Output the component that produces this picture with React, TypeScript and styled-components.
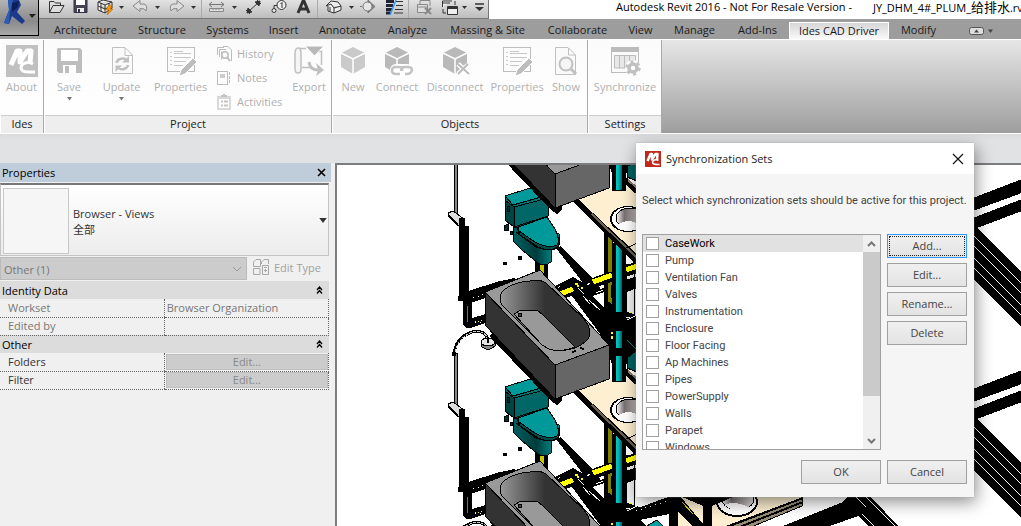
import React from "react";
import styled, { createGlobalStyle, css } from "styled-components";

const ui = `"Open Sans", "Noto Sans CJK SC", sans-serif`;

const Global = createGlobalStyle`
  *, *::before, *::after { box-sizing: border-box; }
  body { margin: 0; font: 11px/16px ${ui}; color: #222; background: #e0e1e3; overflow: hidden; }
  button, input, select { font: inherit; color: inherit; margin: 0; }
  svg { display: block; flex: none; }
`;

/* ---------- frame ---------- */

const Page = styled.div`
  position: relative;
  min-height: 100vh;
  display: flex;
  flex-direction: column;
`;
const Header = styled.header`
  display: grid;
  grid-template-columns: 39px minmax(0, 1fr);
  grid-template-rows: 19px 20px;
`;
const AppButton = styled.button`
  display: flex;
  align-items: flex-start;
  padding: 0;
  height: 36px;
  border: solid #000;
  border-width: 0 1px 1px 0;
  background: linear-gradient(#b4b4b4, #8a8a8a 60%, #a8a8a8);
`;
const AppCell = styled.div`
  grid-row: 1 / 3;
  background: #9d9d9d;
  display: grid;
  align-content: start;
`;
const TitleRow = styled.div`
  display: flex;
  align-items: stretch;
  background: #fff;
  min-width: 0;
`;
const QuickBar = styled.div`
  display: flex;
  flex: none;
  align-items: flex-start;
  padding-left: 8px;
  width: 450px;
  border-right: 1px solid #777;
  border-bottom: 1px solid #777;
  background: linear-gradient(#e2e2e2, #bdbdbd);
`;
const QuickButton = styled.button<{ $w: number }>`
  width: ${(p) => p.$w}px;
  height: 16px;
  padding: 0;
  border: 0;
  background: none;
  display: flex;
  justify-content: center;
  flex: none;
`;
const QuickRule = styled.span`
  width: 1px;
  height: 18px;
  background: #aaa;
  flex: none;
`;
const Title = styled.h1`
  flex: 1;
  min-width: 0;
  margin: 0;
  padding-left: 127px;
  font: 400 11px/14px ${ui};
  white-space: nowrap;
  overflow: hidden;
  color: #000;
  display: flex;
  gap: 21px;
`;
const Han = styled.span`
  font-size: 13px;
`;
const Tabs = styled.nav`
  display: flex;
  align-items: flex-end;
  background: #9d9d9d;
  padding-left: 4px;
  min-width: 0;
`;
const Tab = styled.a<{ $w: number; $on?: boolean }>`
  width: ${(p) => p.$w}px;
  height: 17px;
  line-height: 16px;
  text-align: center;
  white-space: nowrap;
  color: #1a1a1a;
  text-decoration: none;
  flex: none;
  ${(p) => p.$on && css`
    background: linear-gradient(#d6d6d6, #fafafa);
    border: 1px solid #fff;
    border-bottom: 0;
    line-height: 15px;
  `}
`;
const MinimizeRibbon = styled.button`
  margin-left: 20px;
  height: 17px;
  padding: 0;
  border: 0;
  background: none;
  display: flex;
  align-items: center;
`;

/* ---------- ribbon ---------- */

const Ribbon = styled.div`
  display: flex;
  height: 95px;
  border-top: 1px solid #fff;
  border-bottom: 1px solid #fff;
  background: linear-gradient(#e6e6e6, #9e9e9e);
`;
const Panel = styled.section<{ $w: number }>`
  width: ${(p) => p.$w}px;
  flex: none;
  display: flex;
  flex-direction: column;
  background: linear-gradient(#fbfbfb, #fff);
  border-right: 1px solid #a9a9a9;
  border-left: 1px solid #fff;
`;
const PanelBody = styled.div`
  flex: 1;
  display: flex;
  align-items: flex-start;
`;
const PanelName = styled.h2`
  margin: 0;
  height: 18px;
  font: 400 11px/16px ${ui};
  text-align: center;
  background: #eee;
  border-top: 1px solid #ccc;
  color: #222;
`;
const ToolButton = styled.button<{ $w: number }>`
  width: ${(p) => p.$w}px;
  flex: none;
  padding: 5px 0 0;
  border: 0;
  background: none;
  color: #b0b0b0;
  display: flex;
  flex-direction: column;
  align-items: center;
  white-space: nowrap;
  line-height: 16px;
  gap: 2px;
`;
const ToolStack = styled.div`
  width: 76px;
  flex: none;
  padding: 2px 0 0 5px;
`;
const SmallTool = styled.button`
  height: 24px;
  padding: 0;
  border: 0;
  background: none;
  color: #b0b0b0;
  display: flex;
  align-items: center;
  gap: 5px;
`;
const OptionsBar = styled.div`
  height: 29px;
  background: linear-gradient(#d9dadc, #e1e2e4 6px, #e1e2e4);
`;

/* ---------- properties palette ---------- */

const Workspace = styled.main`
  flex: 1;
  display: flex;
  min-height: 0;
`;
const Palette = styled.aside`
  width: 335px;
  flex: none;
  background: #f0f0f0;
  color: #333;
  padding-right: 4px;
`;
const PaletteHead = styled.div`
  height: 19px;
  display: flex;
  justify-content: space-between;
  align-items: center;
  padding: 0 5px 0 2px;
  background: #bfcddb;
  color: #000;
`;
const PaletteTitle = styled.h2`
  margin: 0;
  font: 400 11px/18px ${ui};
`;
const PlainButton = styled.button`
  border: 0;
  padding: 0;
  background: none;
  display: flex;
  align-items: center;
`;
const TypePicker = styled.button`
  width: 329px;
  height: 73px;
  margin-top: 1px;
  padding: 1px 1px 0 2px;
  display: flex;
  align-items: center;
  text-align: left;
  border: 1px solid #c4c4c4;
  border-top: 2px solid #777;
  background: linear-gradient(#fff, #ececec);
`;
const TypePreview = styled.span`
  width: 66px;
  height: 66px;
  border: 1px solid #c8c8c8;
  background: #f6f6f6;
`;
const TypeName = styled.span`
  flex: 1;
  padding: 2px 0 0 4px;
  display: flex;
  flex-direction: column;
  line-height: 16px;
`;
const FilterRow = styled.div`
  display: flex;
  height: 24px;
  margin-top: 1px;
`;
const FilterWrap = styled.div`
  display: grid;
  width: 247px;
  height: 23px;
  align-items: center;
  border: 1px solid #bbb;
  background: #ccc;
  color: #777;
  & > * { grid-area: 1 / 1; }
  & > svg { justify-self: end; margin-right: 4px; }
`;
const FilterSelect = styled.select`
  appearance: none;
  width: 100%;
  height: 21px;
  border: 0;
  padding: 2px 3px 0;
  background: none;
`;
const EditType = styled.button`
  display: flex;
  gap: 4px;
  align-items: center;
  height: 21px;
  margin-left: 6px;
  padding: 0;
  border: 0;
  background: none;
  color: #a0a0a0;
`;
const PropTable = styled.table`
  width: 329px;
  border-collapse: collapse;
  table-layout: fixed;
`;
const GroupCell = styled.th`
  height: 18px;
  padding: 0 6px 0 2px;
  background: #dcdcdc;
  font-weight: 400;
  text-align: left;
  color: #000;
`;
const GroupLine = styled.div`
  display: flex;
  justify-content: space-between;
  align-items: center;
  line-height: 17px;
`;
const PropCell = styled.td<{ $dim?: boolean }>`
  height: 18px;
  padding: 0 0 0 8px;
  line-height: 16px;
  border-bottom: 1px dotted #666;
  color: ${(p) => (p.$dim ? "#777" : "#333")};
`;
const ValueCell = styled(PropCell)`
  padding: 0 0 0 2px;
  border-left: 1px dotted #666;
  border-right: 1px dotted #666;
`;
const ButtonCell = styled(ValueCell)`
  padding: 0 0 0 1px;
`;
const CellButton = styled.button`
  display: block;
  width: 100%;
  height: 16px;
  padding: 0;
  line-height: 14px;
  border: 1px solid #bfbfbf;
  background: #ccc;
  color: #888;
`;

/* ---------- drawing area ---------- */

const View = styled.div`
  flex: 1;
  min-width: 0;
  background: #fff;
  border-left: 2px solid #7d7d7d;
  border-top: 2px solid #7d7d7d;
  overflow: hidden;
  display: grid;
`;

/* ---------- dialog ---------- */

const Dialog = styled.section`
  position: absolute;
  left: 636px;
  top: 143px;
  width: 338px;
  background: #f5f5f5;
  color: #444;
  box-shadow: 0 0 1px #999, 2px 5px 16px rgba(0, 0, 0, 0.45);
`;
const DialogHead = styled.header`
  height: 31px;
  display: flex;
  align-items: center;
  gap: 5px;
  padding: 0 10px 0 9px;
  background: #fff;
`;
const DialogTitle = styled.h2`
  margin: 0;
  flex: 1;
  font: 400 11px/30px ${ui};
  color: #222;
`;
const DialogBody = styled.div`
  padding: 19px 7px 13px 6px;
`;
const Prompt = styled.p`
  margin: 0 0 25px;
  font-family: Roboto, sans-serif;
  line-height: 16px;
  white-space: nowrap;
`;
const Columns = styled.div`
  display: grid;
  grid-template-columns: minmax(0, 1fr) 80px;
  column-gap: 6px;
`;
const ListBox = styled.div`
  height: 216px;
  display: flex;
  border: 1px solid #a0a0a0;
  background: #fff;
  overflow: hidden;
`;
const SetList = styled.ul`
  flex: 1;
  margin: 0;
  padding: 0;
  list-style: none;
  font-family: Roboto, sans-serif;
`;
const SetRow = styled.li<{ $on: boolean }>`
  height: 17px;
  background: ${(p) => (p.$on ? "#e1e1e1" : "none")};
  color: ${(p) => (p.$on ? "#000" : "inherit")};
`;
const SetLabel = styled.label`
  display: flex;
  align-items: center;
  gap: 6px;
  height: 17px;
  padding-left: 3px;
`;
const Check = styled.input`
  appearance: none;
  width: 13px;
  height: 13px;
  border: 1px solid #a0a0a0;
  background: #fff;
  &:checked { background: #666; }
`;
const ScrollBar = styled.div`
  width: 17px;
  display: flex;
  flex-direction: column;
  background: #f0f0f0;
`;
const ScrollArrow = styled.button`
  height: 17px;
  padding: 0;
  border: 0;
  background: #f0f0f0;
  display: grid;
  place-items: center;
`;
const ScrollTrack = styled.div`
  flex: 1;
`;
const ScrollThumb = styled.div`
  height: 80%;
  background: #cacaca;
`;
const Side = styled.div`
  display: flex;
  flex-direction: column;
  gap: 5px;
`;
const PushButton = styled.button<{ $focus?: boolean }>`
  width: 80px;
  height: 24px;
  padding: 0;
  border: 1px solid ${(p) => (p.$focus ? "#3399ff" : "#a0a0a0")};
  background: linear-gradient(#f0f0f0, #e3e3e3);
  ${(p) => p.$focus && css`
    outline: 1px dotted #222;
    outline-offset: -3px;
  `}
`;
const Footer = styled.footer`
  display: flex;
  justify-content: flex-end;
  gap: 6px;
  margin-top: 10px;
`;

/* ---------- icons ---------- */

const Down = ({ w = 6, c = "#333" }: { w?: number; c?: string }) => (
  <svg width={w} height={w / 2 + 1} viewBox="0 0 6 4"><path d="M0 0H6L3 4Z" fill={c} /></svg>
);

const McLogo = ({ size, bg }: { size: number; bg: string }) => (
  <svg width={size} height={size} viewBox="0 0 32 32">
    <rect width="32" height="32" fill={bg} />
    <path d="M5 20L11 6H14L14 17L21 6H25L24 18" fill="none" stroke="#fff" strokeWidth="5" strokeLinejoin="round" />
    <path d="M27 19C22 16 15 18 15 23C16 28 22 27 29 27" fill="none" stroke="#fff" strokeWidth="3" />
  </svg>
);

const Floppy = () => (
  <svg width="32" height="32" viewBox="0 0 32 32">
    <path d="M5 3H27L29 5V28H6L4 26V4Z" fill="#bdbdbd" />
    <rect x="8" y="5" width="17" height="11" fill="#fff" />
    <rect x="10" y="20" width="13" height="8" fill="#fff" />
    <rect x="12" y="21" width="4" height="7" fill="#bdbdbd" />
  </svg>
);
const Update = () => (
  <svg width="32" height="32" viewBox="0 0 32 32" fill="none" stroke="#c0c0c0">
    <path d="M6.500 2.500H19L26.500 10V28.500H6.500Z M19 3V10.500H26" fill="#fafafa" />
    <path d="M10.500 18A6 5 0 0 1 20 14.500M22 20A6 5 0 0 1 13 23.500" strokeWidth="2.500" />
    <path d="M23 11V17.500H16ZM9.500 27V20.500H16Z" fill="#c0c0c0" stroke="none" />
  </svg>
);
const Sheet = () => (
  <svg width="32" height="32" viewBox="0 0 32 32" fill="none" stroke="#bdbdbd">
    <rect x="2.500" y="2.500" width="27" height="24" fill="#fcfcfc" />
    <path d="M5 7.500H7M5 11.500H7M5 15.500H7M5 19.500H7M9 6.500H18M9 8.500H26M9 12.500H26M9 16.500H21M9 20.500H18" stroke="#c8c8c8" />
    <path d="M14 31L16 25L28 13L32 17L20 29Z" fill="#bdbdbd" stroke="#fff" />
  </svg>
);
const Cube = ({ mark }: { mark?: "link" | "cut" }) => (
  <svg width="32" height="32" viewBox="0 0 32 32">
    <path d="M16 2L28 8V22L16 29L4 22V8Z" fill={mark ? "#b9b9b9" : "#cacaca"} />
    <path d="M4 8L16 14L28 8M16 14V29" fill="none" stroke="#fff" strokeWidth="1.500" />
    {mark === "link" && (
      <g fill="none">
        <rect x="9" y="19" width="23" height="13" rx="6" fill="#fff" />
        <path d="M19 29H15Q11 29 11 25.500Q11 22 15 22H18Q22 22 21 26M20 26Q20 22 24 22H27Q31 22 31 25Q30 29 26 29H24" stroke="#c3c3c3" strokeWidth="2.500" />
      </g>
    )}
    {mark === "cut" && (
      <g fill="none"><path d="M19 19L30 29M29 20L19 29" stroke="#fff" strokeWidth="5" />
        <path d="M19 19L30 29M29 19L19 29" stroke="#bbb" strokeWidth="2" /></g>
    )}
  </svg>
);
const Show = () => (
  <svg width="32" height="32" viewBox="0 0 32 32" fill="none" stroke="#c0c0c0">
    <path d="M5.500 2.500H18L25.500 10V29.500H5.500ZM18.500 3V10H25" fill="#fafafa" />
    <circle cx="16" cy="19" r="6.500" strokeWidth="2" fill="#f5f5f5" />
    <path d="M21 24L26 29" strokeWidth="3" />
  </svg>
);
const Sync = () => (
  <svg width="32" height="32" viewBox="0 0 32 32" fill="none" stroke="#bbb">
    <rect x="2.500" y="3.500" width="27" height="24" fill="#fafafa" />
    <rect x="2" y="2" width="28" height="5" fill="#bbb" stroke="none" />
    <path d="M5.500 10.500H26.500V23H5.500ZM10.500 10.500V23M15.500 10.500V23M20.500 10.500V23" fill="#e8e8e8" />
    <circle cx="24" cy="23" r="8" fill="#fff" stroke="none" />
    <circle cx="24" cy="23" r="4" strokeWidth="3.500" stroke="#c0c0c0" />
    <circle cx="24" cy="23" r="6.500" strokeWidth="2.500" strokeDasharray="3 3.800" stroke="#c0c0c0" />
  </svg>
);
const Export = () => (
  <svg width="32" height="32" viewBox="0 0 32 32" fill="none" stroke="#c0c0c0">
    <path d="M6 3.500H13M25 6.500H28.500V20M9 22.500H18" strokeWidth="1.500" />
    <path d="M2 10V24Q2 28 5 28Q8 28 8 24V8Q8 3 5 3Q2 3 2 9V13" fill="#f5f5f5" strokeWidth="1.500" />
    <path d="M12 1H31L21.500 11Z" fill="#b9b9b9" stroke="#fff" />
    <path d="M16 17Q17 25 25 25" strokeWidth="3" /><path d="M23 18L31 25L23 31L25 25Z" fill="#c0c0c0" stroke="none" />
  </svg>
);
const History = () => (
  <svg width="16" height="16" viewBox="0 0 16 16" fill="none" stroke="#bdbdbd">
    <path d="M1.500 9V1.500H8M3.500 11V3.500H10M5.500 13.500V5.500M7 .5H12L15.500 4V15" />
    <circle cx="9" cy="9" r="3.200" strokeWidth="1.500" /><path d="M11 11L14 15" strokeWidth="2" />
  </svg>
);
const Notes = () => (
  <svg width="16" height="16" viewBox="0 0 16 16" fill="none" stroke="#bdbdbd">
    <rect x="1.500" y="1.500" width="10" height="13" /><rect x="4" y="4" width="5" height="4" fill="#ccc" stroke="none" />
    <path d="M13.500 2V5M13.500 6V9M13.500 10V13" />
  </svg>
);
const Activities = () => (
  <svg width="16" height="16" viewBox="0 0 16 16">
    <path d="M1 2H15V16H1Z" fill="#d9d9d9" /><path d="M3 5H13V14H3Z" fill="#fff" />
    <path d="M5 3V1H7V0H9V1H11V3Z" fill="#c4c4c4" />
    <path d="M5 7.500H7M5 11.500H7M8 7.500H12M8 11.500H12" stroke="#c4c4c4" strokeWidth="2" />
  </svg>
);

const q = { width: 17, height: 16, viewBox: "0 0 17 16", fill: "none", stroke: "#333" };
const QuickIcon: Record<string, React.ReactNode> = {
  open: <svg {...q}><path d="M1.500 12.500V1.500H6L7.500 3H12.500V5.500M1.500 12.500L5 5.500H16L12 12.500Z" fill="#ddd" /></svg>,
  save: <svg {...q}><path d="M2 0V12.500H15V0" fill="#445" stroke="#334" /><rect x="4" y="0" width="9" height="5" fill="#fff" stroke="none" /><path d="M5 12V8H12V12" fill="#eee" stroke="none" /><rect x="6" y="9" width="2" height="3" fill="#334" stroke="none" /></svg>,
  sync: <svg {...q}><path d="M1 2L6 0L15 2V8L8 13L1 10ZM1 2L8 5L15 2M8 5V13M4 3V11M12 3V10M1 6L8 9L15 6" fill="#eee" /><path d="M12 5L9 10H12L10 15L16 9H13L15 5Z" fill="#f90" stroke="#b60" strokeWidth=".6" /></svg>,
  undo: <svg {...q}><path d="M1 6L8 .5V4H12Q16 5 14 11Q13 8 8 8.500V11.500Z" fill="#ddd" stroke="#888" /></svg>,
  redo: <svg {...q}><path d="M16 6L9 .5V4H5Q1 5 3 11Q4 8 9 8.500V11.500Z" fill="#ddd" stroke="#888" /></svg>,
  measure: <svg {...q}><path d="M1 4.500H16M4 2L1 4.500L4 7M13 2L16 4.500L13 7" stroke="#777" /><path d="M1.500 8.500H15.500V11.500H1.500ZM5 9V10M8 9V10M11 9V10" stroke="#888" fill="#ddd" /></svg>,
  dim: <svg {...q}><path d="M3 12L14 2M1 10L5 14M12 0L16 4" /><path d="M2 13L3 8L7 12ZM15 1L10 2L14 6Z" fill="#333" /></svg>,
  tag: <svg {...q}><path d="M4 8.500V5.500H8" /><circle cx="11.500" cy="5" r="4.500" fill="#eee" /><path d="M10.500 4L12 2.500V8" /><circle cx="4" cy="10.500" r="2" fill="#eee" /></svg>,
  text: <svg {...q}><path d="M3 13L8.500 0L14 13M5 9H12" strokeWidth="3" /></svg>,
  house: <svg {...q}><path d="M1 6L6 1L13 2L16 6V10L9 13L3 11V6M1 6L6 4L9 8L16 6M9 8V13M5 7V11" fill="#eee" /></svg>,
  section: <svg {...q}><path d="M2 6.500H0M8 0L15 6.500L8 13Z" fill="#888" stroke="#777" /><circle cx="7.500" cy="6.500" r="4.500" fill="#e6e6e6" stroke="#777" /></svg>,
  lines: <svg {...q}><path d="M0 1.500H8M0 5.500H7M0 9.500H6M0 13H5" strokeWidth="3" stroke="#223" /><path d="M10 1.500H17M10 5.500H17M9 9.500H17M8 13H17" /><path d="M4 15L10 0" stroke="#39f" strokeWidth="1.500" /></svg>,
  close: <svg {...q} stroke="#888"><path d="M4 4V.5H14V6M1.500 4.500H11.500V12.500H1.500ZM1 7H11" fill="#ddd" /><path d="M9 8L15 14M15 8L9 14" strokeWidth="2" /></svg>,
  swap: <svg {...q}><path d="M1.500 7V1H11M1 3H9M6.500 6.500H16.500V14.500H6.500Z" fill="#eee" /><path d="M6 8H17" strokeWidth="2" /><path d="M2 9V13H5M14 5V1" /></svg>,
  more: <svg {...q}><path d="M4 4H13" strokeWidth="1.500" /><path d="M4 7H13L8.500 11Z" fill="#333" stroke="none" /></svg>,
  down: <svg width="6" height="10" viewBox="0 0 6 10"><path d="M0 6H5L2.500 9Z" fill="#333" /></svg>,
};

const quick: [string, string, number][] = [
  ["open", "Open", 18], ["save", "Save", 30], ["sync", "Synchronize", 20], ["down", "Synchronize options", 14],
  ["undo", "Undo", 22], ["down", "Undo list", 14], ["redo", "Redo", 22], ["down", "Redo list", 14], ["|", "", 1],
  ["measure", "Measure", 29], ["down", "Measure options", 8], ["dim", "Aligned dimension", 28], ["tag", "Tag", 22], ["text", "Text", 28], ["|", "", 1],
  ["house", "3D view", 30], ["down", "View options", 8], ["section", "Section", 24], ["lines", "Thin lines", 28], ["|", "", 1],
  ["close", "Close hidden windows", 30], ["swap", "Switch windows", 20], ["down", "Window list", 12], ["more", "Customize", 17],
];

const tabs: [string, number][] = [
  ["Architecture", 85], ["Structure", 68], ["Systems", 63], ["Insert", 49], ["Annotate", 69], ["Analyze", 61],
  ["Massing & Site", 99], ["Collaborate", 81], ["View", 45], ["Manage", 63], ["Add-Ins", 63], ["Ides CAD Driver", 100], ["Modify", 59],
];

const sets = ["CaseWork", "Pump", "Ventilation Fan", "Valves", "Instrumentation", "Enclosure", "Floor Facing",
  "Ap Machines", "Pipes", "PowerSupply", "Walls", "Parapet", "Windows"];

const Tool = ({ w, label, icon, menu }: { w: number; label: string; icon: React.ReactNode; menu?: boolean }) => (
  <ToolButton $w={w}>{icon}<span>{label}</span>{menu && <Down w={5} c="#777" />}</ToolButton>
);

/* ---------- plumbing model: one storey is repeated every 191 units ---------- */

const STOREY = 191;
const levels = [-STOREY, 0, STOREY];

const Model = () => (
  <svg width="100%" height="100%" shapeRendering="crispEdges">
    <defs>
      <linearGradient id="tub" x1="500" x2="545" y1="0" y2="0" gradientUnits="userSpaceOnUse"><stop stopColor="#999" /><stop offset="1" stopColor="#333" /></linearGradient>
      <linearGradient id="teal"><stop stopColor="#00c8c8" /><stop offset=".4" stopColor="#00b4b4" /><stop offset="1" stopColor="#006060" /></linearGradient>
      <linearGradient id="bowl"><stop stopColor="#fff" /><stop offset=".3" stopColor="#777070" /><stop offset="1" stopColor="#e8e0e0" /></linearGradient>
      <linearGradient id="base" x1="513" x2="552" y1="0" y2="0" gradientUnits="userSpaceOnUse"><stop stopColor="#006060" /><stop offset=".6" stopColor="#003c3c" /><stop offset="1" stopColor="#008080" /></linearGradient>

      <g id="runs">
        <path d="M459 225L469 226V300H459ZM458 296H464V301H458Z" />
        <path d="M463 298H472V318L486 314V323L470 328Q463 328 463 323Z" />
        <rect x="467" y="306" width="1" height="16" fill="#808000" />
        <path d="M468 291L500 281L515 278V284L485 298L470 303Z" />
        <path d="M473 298L484 294M475 322H484" stroke="#fff" strokeDasharray="1 4" />
        <path d="M475 322L484 320" stroke="#ff0" strokeDasharray="1 2" />
        <path d="M454 353H457V406H454Z" fill="#888" stroke="#000" />
        <path d="M454 354Q456 337 472 332Q487 329 488 342" fill="none" stroke="#000" strokeWidth="3" />
        <path d="M455 352Q458 338 472 332Q485 330 487 338" fill="none" stroke="#ccc" strokeDasharray="3 1" />
        <rect x="452" y="352" width="4" height="4" />
        <path d="M481 343V346Q488 353 495 346V343Z" fill="#888" stroke="#000" />
        <ellipse cx="488" cy="342" rx="7" ry="4" fill="#e4e4e4" stroke="#000" />
        <path d="M487 337H489V343H487Z" />
        <path d="M448 404L453 402L464 410V415L459 417L449 408Z" fill="#ddd" stroke="#000" />
        <path d="M449 406L458 414V417L449 409ZM459 409H465V420L459 416Z" />

        <rect x="626" y="264" width="8" height="56" fill="#f0f0f0" stroke="#000" />
        <path d="M604 230H613V345H604Z" />
        <rect x="608" y="237" width="4" height="67" fill="#808000" />
        {/* branch lines climbing to the right */}
        <path d="M551 288L573 277L582 282L640 260V272L560 300L552 292Z" />
        <path d="M590 293L640 275V287L600 302Z" />
        {/* diagonal drain, widening into the junction by the riser */}
        <path d="M556 248L561 246L596 282L614 308L640 316V364H612L603 338L572 296L577 290L584 284Z" />
        <path d="M592 296L604 292V308Z" fill="#fff" />
        <path d="M589 300L600 310M583 296L590 304M578 288L584 294M575 285L578 283M587 285L590 283" stroke="#fff" />
        <path d="M615 284L622 281M596 293L603 290M556 290L560 286" stroke="#fff" />
        <path d="M560 294L573 289M593 282L612 275M626 270L637 266" stroke="#ff0" strokeWidth="5" />
        <path d="M577 286H579M581 288H583M575 284H578" stroke="#ff0" strokeWidth="2" />
        <path d="M608 260H612V272H608ZM608 286H611V302H608Z" fill="#808000" />
        <path d="M627 320L637 315M626 317H630" stroke="#fff" />
        <path d="M630 312H632M622 334H624" stroke="#ff0" />
        <path d="M612 243H626V382H612Z" />
        <path d="M616 243H622V312H616ZM616 331H622V348H616ZM616 356H622V380H616Z" fill="url(#teal)" />
        <path d="M611 333H613M612 336V339" stroke="#ff0" strokeWidth="2" />
        <path d="M627 358L637 350V372L627 368Z" fill="#006060" stroke="#000" />
        <path d="M627 340L637 350" stroke="#088" />
      </g>

      <g id="counter">
        <path d="M577 200L609 188L627 181L640 186V263L577 201Z" fill="#fdefd0" />
        <path d="M573 201L578 199L637 254V266Z" />
        <path d="M592 214L637 258" stroke="#6b6350" strokeWidth="2" />
        <path d="M625 180L637 191" stroke="#000" strokeWidth="6" />
        <path d="M628 180L637 188" stroke="#8a806a" strokeWidth="2" />
        <path d="M626 248L640 242" stroke="#000" />
        <ellipse cx="628" cy="219" rx="18" ry="13" fill="#000" />
        <ellipse cx="628" cy="219" rx="16" ry="12" fill="#fff" />
        <ellipse cx="630" cy="218" rx="14" ry="10" fill="url(#bowl)" stroke="#000" />
        <path d="M618 225Q628 217 640 225L640 229H624Z" fill="#fff" />
      </g>

      <g id="toilet" stroke="#000">
        <path d="M535 450H548V475H535Z" stroke="none" />
        <rect x="540" y="455" width="4" height="18" fill="#c8c800" stroke="none" />
        <path d="M513 418V432L522 441L538 454Q545 458 551 453L552 441L559 436V425L545 420Z" fill="url(#base)" />
        <path d="M516 416L520 426L538 438Q552 444 558 438Q561 432 556 424L546 408Z" fill="#004c4c" />
        <path d="M518 418L547 408L555 420Q561 433 557 436Q548 440 535 433L519 422Z" fill="#009999" />
        <path d="M516 423L536 438Q552 444 558 437" fill="none" />
        <path d="M505 390L514 398V418L505 411Z" fill="#004444" />
        <path d="M514 398L548 387V407L514 418Z" fill="#006666" />
        <path d="M505 387L530 379L548 386V389L514 398L505 391Z" fill="#007878" />
        <path d="M505 387L530 379L548 386L513 396Z" fill="#009999" />
        <path d="M504 417L508 415V421H504ZM510 422H512V425H510ZM507 397H509V402H507Z" fill="#033" />
        <path d="M503 453H506V455H503ZM518 447H521V450H518Z" />
      </g>

      <g id="bath">
        <path d="M492 334L556 401" stroke="#000" strokeWidth="7" />
        <path d="M553 395H562V401L557 405L552 401Z" />
        <path d="M510 352L513 355" stroke="#ff0" />
        <g stroke="#000">
          <path d="M485 292L555 365V399L485 325Z" fill="#333" />
          <path d="M555 365L609 345V379L555 399Z" fill="#666" />
          <path d="M485 292L540 270L609 345L555 365Z" fill="#999" />
          <path d="M500 298C500 289 514 282 530 281Q540 279 546 283L583 318C591 327 592 336 586 341C578 349 562 353 549 349L542 345L502 305Q500 302 500 298Z" fill="url(#tub)" />
          <path d="M514 314L521 310H537L543 315L575 347Q560 353 549 349L542 345Z" fill="#999" />
          <circle cx="520" cy="315" r="2" fill="#444" />
          <path d="M572 352L576 351M580 348L584 349" strokeWidth="2" />
        </g>
      </g>

      <g id="mains">
        <path d="M970 199L1030 176V190L970 212ZM970 219L1030 196V208L977 228L1030 281V336L970 275Z" />
        <path d="M970 232L1030 292M970 242L1030 302M970 254L1030 314M970 264L1030 324" stroke="#fff" />
      </g>
    </defs>
    <g transform="translate(-337 -165)">
      {levels.map((y) => <use key={y} href="#runs" y={y} />)}
      {levels.map((y) => <use key={y} href="#counter" y={y + STOREY} />)}
      <use href="#counter" />
      <path d="M612 165H626V191H612Z" />
      <path d="M616 165H622V190H616Z" fill="url(#teal)" />
      <path d="M612 356H626V382H612Z" />
      <path d="M616 356H622V381H616Z" fill="url(#teal)" />
      {levels.map((y) => <use key={y} href="#toilet" y={y} />)}
      {levels.map((y) => <use key={y} href="#bath" y={y} />)}
      {levels.map((y) => <use key={y} href="#mains" y={y + STOREY} />)}
      <path d="M676 490H802V506L745 530H676Z" fill="#fdefd0" />
      <path d="M802 498V506L744 530L727 526Z" fill="#978c75" stroke="#000" />
      <path d="M727 527L803 498M732 530L803 502" stroke="#000" strokeWidth="2" />
      <ellipse cx="737" cy="502" rx="20" ry="14" fill="#fff" stroke="#000" strokeWidth="2" />
      <ellipse cx="738" cy="499" rx="16" ry="11" fill="url(#bowl)" stroke="#000" />
      <path d="M724 505Q736 500 750 508L738 513Z" fill="#fff" />
      <path d="M630 511L676 494H740L712 506V530H703V506L680 496L708 530H696L678 512V530H669V514L640 520L650 530H630Z" />
      <path d="M636 511L668 501" stroke="#fff" strokeDasharray="1 4" />
      <path d="M682 502L693 514" stroke="#dd0" />
      <path d="M640 530L657 520L663 526V530Z" fill="#00a0a0" stroke="#000" />
      <path d="M783 526L843 502L850 494H868L902 530H872L858 516L830 526Z" />
      <path d="M856 497L866 507M866 497L895 526M862 514L876 528" stroke="#fff" />
    </g>
  </svg>
);

const Chevrons = () => (
  <svg width="7" height="8" viewBox="0 0 7 8" fill="none" stroke="#000"><path d="M1 4L3.500 1L6 4M1 7.500L3.500 4.500L6 7.500" strokeWidth="1.300" /></svg>
);

export default function App() {
  return (
    <>
      <Global />
      <Page>
        <Header>
          <AppCell>
            <AppButton aria-label="Application menu">
              <svg width="38" height="30" viewBox="0 0 38 30">
                <path d="M8 0H19L21 5L17 12L25 21L22 24L12 16L9 24L4 23L9 10Z" fill="#1c3a8c" />
                <path d="M8 0H13L10 12L9 24L4 23L9 10Z" fill="#2d5bb8" /><path d="M12 3L19 1L18 7L12 12Z" fill="#0d205c" />
                <path d="M29 14H36L32 18Z" fill="#222" />
              </svg>
            </AppButton>
          </AppCell>
          <TitleRow>
            <QuickBar>
              {quick.map(([icon, label, w], i) => icon === "|" ? <QuickRule key={i} /> : (
                <QuickButton key={i} $w={w} aria-label={label}>{QuickIcon[icon]}</QuickButton>
              ))}
            </QuickBar>
            <Title><span>Autodesk Revit 2016 - Not For Resale Version -</span><span>JY_DHM_4#_PLUM_<Han>给排水</Han>.rvt</span></Title>
          </TitleRow>
          <Tabs>
            {tabs.map(([t, w]) => <Tab key={t} href="#" $w={w} $on={t === "Ides CAD Driver"}>{t}</Tab>)}
            <MinimizeRibbon aria-label="Minimize ribbon">
              <svg width="26" height="10" viewBox="0 0 26 10">
                <rect x="1.500" y="1.500" width="14" height="7" rx="2" fill="#ddd" stroke="#555" />
                <path d="M6 6.500L8.500 3.500L11 6.500ZM20 3.500H25L22.500 7Z" fill="#444" />
              </svg>
            </MinimizeRibbon>
          </Tabs>
        </Header>

        <Ribbon>
          <Panel $w={44}>
            <PanelBody><Tool w={41} label="About" icon={<McLogo size={32} bg="#c0c0c0" />} /></PanelBody>
            <PanelName>Ides</PanelName>
          </Panel>
          <Panel $w={288}>
            <PanelBody>
              <Tool w={48} label="Save" icon={<Floppy />} menu />
              <Tool w={57} label="Update" icon={<Update />} menu />
              <Tool w={61} label="Properties" icon={<Sheet />} />
              <ToolStack>
                <SmallTool><History />History</SmallTool>
                <SmallTool><Notes />Notes</SmallTool>
                <SmallTool><Activities />Activities</SmallTool>
              </ToolStack>
              <Tool w={44} label="Export" icon={<Export />} />
            </PanelBody>
            <PanelName>Project</PanelName>
          </Panel>
          <Panel $w={256}>
            <PanelBody>
              <Tool w={40} label="New" icon={<Cube />} />
              <Tool w={48} label="Connect" icon={<Cube mark="link" />} />
              <Tool w={68} label="Disconnect" icon={<Cube mark="cut" />} />
              <Tool w={56} label="Properties" icon={<Sheet />} />
              <Tool w={42} label="Show" icon={<Show />} />
            </PanelBody>
            <PanelName>Objects</PanelName>
          </Panel>
          <Panel $w={74}>
            <PanelBody><Tool w={72} label="Synchronize" icon={<Sync />} /></PanelBody>
            <PanelName>Settings</PanelName>
          </Panel>
        </Ribbon>
        <OptionsBar />

        <Workspace>
          <Palette>
            <PaletteHead>
              <PaletteTitle>Properties</PaletteTitle>
              <PlainButton aria-label="Close properties">
                <svg width="9" height="9" viewBox="0 0 9 9"><path d="M1 1L8 8M8 1L1 8" stroke="#000" strokeWidth="1.600" /></svg>
              </PlainButton>
            </PaletteHead>
            <TypePicker>
              <TypePreview />
              <TypeName><span>Browser - Views</span><span>全部</span></TypeName>
              <Down w={8} />
            </TypePicker>
            <FilterRow>
              <FilterWrap>
                <FilterSelect aria-label="Element filter"><option>Other (1)</option></FilterSelect>
                <svg width="10" height="6" viewBox="0 0 10 6"><path d="M1 1L5 5L9 1" fill="none" stroke="#999" /></svg>
              </FilterWrap>
              <EditType>
                <svg width="17" height="17" viewBox="0 0 17 17" fill="none" stroke="#a8a8a8">
                  <path d="M.5 7.500V3L3 .5H7.500V7.500ZM8.500 5V3L11 .5H15.500V5M.5 9.500H7V15.500H.5ZM9.500 6.500H15.500V15.500H9.500ZM11 8.500H14M11 11.500H14M12.500 10V13" />
                </svg>
                Edit Type
              </EditType>
            </FilterRow>
            <PropTable>
              <colgroup><col style={{ width: "50%" }} /><col /></colgroup>
              <tbody>
                <tr><GroupCell colSpan={2}><GroupLine>Identity Data<Chevrons /></GroupLine></GroupCell></tr>
                <tr><PropCell $dim>Workset</PropCell><ValueCell $dim>Browser Organization</ValueCell></tr>
                <tr><PropCell $dim>Edited by</PropCell><ValueCell $dim /></tr>
                <tr><GroupCell colSpan={2}><GroupLine>Other<Chevrons /></GroupLine></GroupCell></tr>
                <tr><PropCell>Folders</PropCell><ButtonCell><CellButton>Edit...</CellButton></ButtonCell></tr>
                <tr><PropCell>Filter</PropCell><ButtonCell><CellButton>Edit...</CellButton></ButtonCell></tr>
              </tbody>
            </PropTable>
          </Palette>
          <View><Model /></View>
        </Workspace>

        <Dialog role="dialog" aria-labelledby="sync-title">
          <DialogHead>
            <McLogo size={16} bg="#c0281c" />
            <DialogTitle id="sync-title">Synchronization Sets</DialogTitle>
            <PlainButton aria-label="Close">
              <svg width="12" height="12" viewBox="0 0 12 12"><path d="M1 1L11 11M11 1L1 11" stroke="#111" strokeWidth="1.200" /></svg>
            </PlainButton>
          </DialogHead>
          <DialogBody>
            <Prompt>Select which synchronization sets should be active for this project.</Prompt>
            <Columns>
              <ListBox>
                <SetList>
                  {sets.map((s, i) => (
                    <SetRow key={s} $on={i === 0}><SetLabel><Check type="checkbox" />{s}</SetLabel></SetRow>
                  ))}
                </SetList>
                <ScrollBar>
                  <ScrollArrow aria-label="Scroll up"><svg width="9" height="6" viewBox="0 0 9 6"><path d="M1 5L4.500 1.500L8 5" fill="none" stroke="#777" strokeWidth="2" /></svg></ScrollArrow>
                  <ScrollTrack><ScrollThumb /></ScrollTrack>
                  <ScrollArrow aria-label="Scroll down"><svg width="9" height="6" viewBox="0 0 9 6"><path d="M1 1L4.500 4.500L8 1" fill="none" stroke="#777" strokeWidth="2" /></svg></ScrollArrow>
                </ScrollBar>
              </ListBox>
              <Side>
                <PushButton $focus>Add...</PushButton>
                <PushButton>Edit...</PushButton>
                <PushButton>Rename...</PushButton>
                <PushButton>Delete</PushButton>
              </Side>
            </Columns>
            <Footer><PushButton>OK</PushButton><PushButton>Cancel</PushButton></Footer>
          </DialogBody>
        </Dialog>
      </Page>
    </>
  );
}
